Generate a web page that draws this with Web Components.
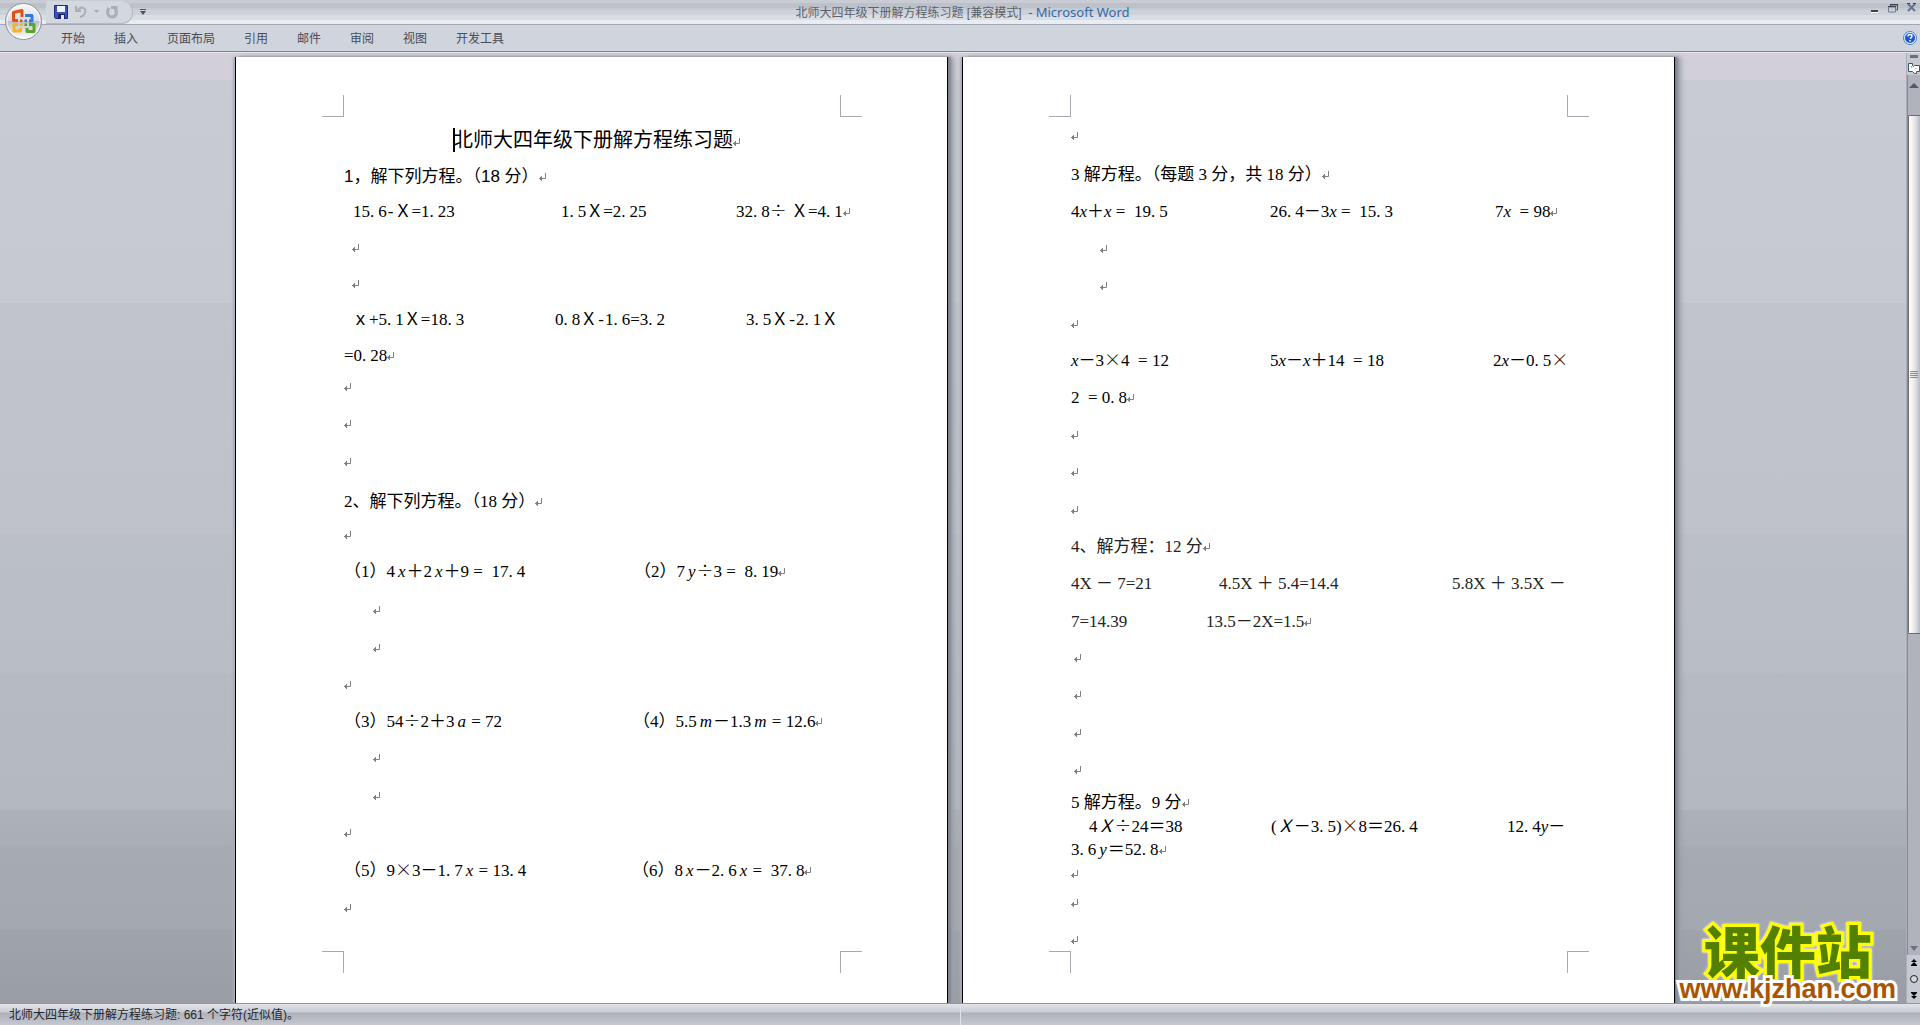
<!DOCTYPE html>
<html lang="zh-CN">
<head>
<meta charset="utf-8">
<title>北师大四年级下册解方程练习题 - Microsoft Word</title>
<style>
html,body{margin:0;height:100%}
body{overflow:hidden;font:12px/16px "Liberation Sans","Noto Sans CJK SC",sans-serif}
</style>
</head>
<body>
<word-app></word-app>
<script>
const define = (name, html, init) => {
  const t = document.createElement('template');
  t.innerHTML = html;
  customElements.define(name, class extends HTMLElement {
    constructor() {
      super();
      this.attachShadow({mode: 'open'}).append(t.content.cloneNode(true));
    }
    connectedCallback() { if (init) init(this, this.shadowRoot); }
  });
};
const BUTTON = 'button{border:0;padding:0;margin:0;background:none;font:inherit;color:inherit;display:flex;align-items:center;justify-content:center}svg{display:block}';

/* Line data: [height, segments, closing mark]. A segment is [start, text, style];
   *a* sets italics, style "r" is the proportional roman face. */
const PAGES = {
  1: [
    [95, [[109, '|北师大四年级下册解方程练习题', 't']], 1],
    [37, [[0, '1，解下列方程。（18 分）', 'b']], 1],
    [35, [[9, '15.6-Ｘ=1.23'], [217, '1.5Ｘ=2.25'], [392, '32.8÷ Ｘ=4.1']], 1],
    [36, [[8, '']], 1],
    [36, [[8, '']], 1],
    [36, [[8, 'ｘ+5.1Ｘ=18.3'], [211, '0.8Ｘ-1.6=3.2'], [402, '3.5Ｘ-2.1Ｘ']], 0],
    [36, [[0, '=0.28']], 1],
    [31, [[0, '']], 1],
    [37, [[0, '']], 1],
    [38, [[0, '']], 1],
    [40, [[0, '2、解下列方程。（18 分）']], 1],
    [33, [[0, '']], 1],
    [37, [[0, '（1）4*x*＋2*x*＋9 =  17.4'], [290, '（2）7*y*÷3 =  8.19']], 1],
    [38, [[29, '']], 1],
    [38, [[29, '']], 1],
    [37, [[0, '']], 1],
    [37, [[0, '（3）54÷2＋3*a* = 72', 'r'], [289, '（4）5.5*m*－1.3*m* = 12.6', 'r']], 1],
    [36, [[29, '']], 1],
    [38, [[29, '']], 1],
    [37, [[0, '']], 1],
    [38, [[0, '（5）9×3－1.7*x* = 13.4'], [288, '（6）8*x*－2.6*x* =  37.8']], 1],
    [37, [[0, '']], 1]
  ],
  2: [
    [91, [[0, '']], 1],
    [39, [[0, '3 解方程。（每题 3 分，共 18 分）']], 1],
    [37, [[0, '4*x*＋*x* =  19.5', 'n'], [199, '26.4－3*x* =  15.3', 'n'], [424, '7*x*  = 98', 'n']], 1],
    [37, [[29, '']], 1],
    [37, [[29, '']], 1],
    [38, [[0, '']], 1],
    [37, [[0, '*x*－3×4  = 12', 'n'], [199, '5*x*－*x*＋14  = 18', 'n'], [422, '2*x*－0.5×', 'n']], 0],
    [37, [[0, '2  = 0.8']], 1],
    [37, [[0, '']], 1],
    [37, [[0, '']], 1],
    [38, [[0, '']], 1],
    [37, [[0, '4、解方程：12 分', 'g']], 1],
    [37, [[0, '4X － 7=21', 'g r'], [148, '4.5X ＋ 5.4=14.4', 'g r'], [381, '5.8X ＋ 3.5X －', 'g r']], 0],
    [38, [[0, '7=14.39', 'g r'], [135, '13.5－2X=1.5', 'g r']], 1],
    [36, [[3, '']], 1],
    [37, [[3, '']], 1],
    [38, [[3, '']], 1],
    [37, [[3, '']], 1],
    [33, [[0, '5 解方程。9 分']], 1],
    [23, [[18, '4*Ｘ*÷24＝38', 'n'], [200, '(*Ｘ*－3.5)×8＝26.4', 'n'], [436, '12.4*y*－', 'n']], 0],
    [24, [[0, '3.6*y*＝52.8']], 1],
    [24, [[0, '']], 1],
    [29, [[0, '']], 1],
    [37, [[0, '']], 1]
  ]
};
const MARK = '<svg class="mark" width="8" height="8" viewBox="0 0 8 8" fill="none" stroke="#808080" aria-hidden="true"><path d="M6.500 0V5.500H0M2.500 3V8M1.500 4V7M.5 5V6"/></svg>';
const mark = (text, style) => {
  let s = text.replace(/\*(.+?)\*/g, '<i>$1</i>').replace(/-/g, '<span class="dash">-</span>').replace(/[÷×]/g, '<span class="op">$&</span>');
  if (!/r|b|t/.test(style)) s = s.replace(/\./g, '<span class="dot">.</span>');
  return s.replace('|', '<span class="caret"></span>');
};

define('doc-page', `<style>
:host{display:block;position:relative;box-sizing:border-box;flex:0 1 713px;min-width:0;height:100%;background:#fff;border:solid #000;border-width:0 1px;padding:0 106px 0 108px;
  box-shadow:1px 0 0 #7d818a,3px 0 2px #868a93,6px 0 5px #9ca0a9,-2px 0 2px #a9adb6}
.line{display:grid;align-items:end;color:#000;font:17px/24px "Liberation Serif","Noto Sans CJK SC",serif;white-space:pre}
.seg{grid-row:1}
.t{font-size:20px}
.b{font-family:"Liberation Sans","Noto Sans CJK SC",sans-serif}
.g{color:#222}
i{padding:0 1px 0 3px}
.n i{padding:0}
.dot{padding-right:4px}
.dash{padding:0 1px}
.op{display:inline-block;width:17px;text-align:center;font-family:"Noto Sans CJK SC",sans-serif;font-weight:300;line-height:16px}
.mark{display:inline-block;vertical-align:1px}
.caret{display:inline-block;width:2px;height:24px;background:#000;vertical-align:-5px;margin-right:-2px}
.crop{position:absolute;width:21px;height:21px;border:0 solid #a5a9b3}
.tl{top:38px;left:86px;border-width:0 1px 1px 0}
.tr{top:38px;right:85px;border-width:0 0 1px 1px}
.bl{top:894px;left:86px;border-width:1px 1px 0 0}
.br{top:894px;right:85px;border-width:1px 0 0 1px}
</style>
<span class="crop tl"></span><span class="crop tr"></span><span class="crop bl"></span><span class="crop br"></span>
<article></article>`, (el, root) => {
  root.querySelector('article').innerHTML = PAGES[el.getAttribute('number')].map(([h, segs, end]) => {
    const cols = segs.map(([x], i) => (x - (i ? segs[i - 1][0] : 0)) + 'px').join(' ') + ' 1fr';
    const body = segs.map(([, text, style = ''], i) =>
      `<span class="seg ${style}" style="grid-column:${i + 2}">${mark(text, style)}${end && i === segs.length - 1 ? MARK : ''}</span>`).join('');
    return `<div class="line" style="height:${h}px;grid-template-columns:${cols}">${body}</div>`;
  }).join('');
});

define('title-bar', `<style>
:host{display:flex;align-items:center;height:24px;border-bottom:1px solid #a3a8b2;background:linear-gradient(#c9ccd5 0 3px,#bdc1ca 3px 8px,#c6cad2 8px 10px,#cdd1d9 10px 15px,#dadde2 15px 20px,#e8ecf3 20px)}
${BUTTON}
.quick,.win{flex:1 1 0;display:flex;align-items:center}
.pill{display:flex;align-items:center;box-sizing:border-box;height:23px;margin-left:46px;padding:0 12px 0 8px;border:1px solid #b4b9c3;border-top:0;border-left:0;border-radius:0 11px 11px 0;background:#d3d7de;gap:5px}
.more{margin-left:7px}
h1{margin:0;padding-left:8px;font:12px/18px "Liberation Sans","Noto Sans CJK SC",sans-serif;color:#5c616b;white-space:pre}
h1 span{font:13px/18px "Noto Sans",sans-serif;color:#336aa8}
.win{justify-content:flex-end;gap:9px;padding-right:3px;height:16px;align-self:flex-start}
</style>
<div class="quick"><div class="pill">
<button aria-label="保存"><svg width="14" height="14" viewBox="0 0 14 14"><path d="M.5.5h13v13h-12l-1-1z" fill="#3f51b5" stroke="#22298c"/><path d="M3 1h8v6H3z" fill="#eef3ff"/><path d="M4 9h7v5H4z" fill="#1d2468"/><path d="M7 10h3v4H7z" fill="#e6e8f4"/></svg></button>
<button aria-label="撤消"><svg width="16" height="14" viewBox="0 0 16 14" fill="none" stroke="#a9aeb9" stroke-width="2"><path d="M3 1v5h5M4 6C8 0 14 3 12 8q-1 3-5 4"/></svg></button>
<button aria-label="撤消列表"><svg width="5" height="3"><path d="M0 0h5L2.500 3z" fill="#a3a8b3"/></svg></button>
<button aria-label="恢复"><svg width="16" height="14" viewBox="0 0 16 14" fill="none" stroke="#a9aeb9" stroke-width="3"><path d="M5 3C2 7 4 12 8 12s6-5 3-8M7 2.500H12V7"/></svg></button>
</div><button class="more" aria-label="自定义快速访问工具栏"><svg width="6" height="6"><path d="M0 0h6v1H0zM0 2h6L3 6z" fill="#4d525c"/></svg></button></div>
<h1>北师大四年级下册解方程练习题 [兼容模式]  <span>- Microsoft Word</span></h1>
<div class="win">
<button aria-label="最小化"><svg width="8" height="10"><path d="M0 7h7v2H0z" fill="#3f444e"/><path d="M0 9h7v1H0z" fill="#fff"/></svg></button>
<button aria-label="还原"><svg width="10" height="9" viewBox="0 0 10 9" fill="none"><path d="M2.500 2V1h7v5H8" stroke="#4c5667"/><path d="M.5 3h7v5h-7z" stroke="#6d7d96"/><path d="M0 2.500h8M2 .5h8" stroke="#3f444e"/></svg></button>
<button aria-label="关闭"><svg width="10" height="10" viewBox="0 0 10 10"><path d="M1 1l7 7M8 1L1 8" stroke="#67758c" stroke-width="2"/><path d="M0 .5h3M6 .5h3" stroke="#3f444e"/></svg></button>
</div>`);

define('ribbon-tabs', `<style>
:host{display:flex;align-items:center;height:26px;padding:0 3px 0 61px;background:#d0d4dc;border-bottom:1px solid #80868f;box-shadow:0 1px #e4e6eb;position:relative}
${BUTTON}
nav{display:flex;gap:29px;flex:1;color:#474d59;font-size:12px;line-height:18px;padding-top:2px}
</style>
<nav><button>开始</button><button>插入</button><button>页面布局</button><button>引用</button><button>邮件</button><button>审阅</button><button>视图</button><button>开发工具</button></nav>
<button aria-label="帮助"><svg width="14" height="14" viewBox="0 0 14 14" fill="none"><circle cx="7" cy="7" r="6.500" fill="#e4effc" stroke="#4b83cf"/><circle cx="7" cy="7" r="5" fill="#1d55cf"/><path d="M5 5.500q0-2 2-2t2 1.700q0 1-2 2.300M7 9v1.500" stroke="#fff" stroke-width="1.500"/></svg></button>`);

define('office-button', `<style>
:host{position:absolute;left:4px;top:2px;z-index:2}
${BUTTON}</style>
<button aria-label="Office 按钮"><svg width="39" height="39" viewBox="0 0 39 39" fill="none">
<defs><linearGradient id="g" x2="0" y2="1"><stop stop-color="#f8f8fa"/><stop offset=".48" stop-color="#dcdde1"/><stop offset=".5" stop-color="#bfc1c8"/><stop offset="1" stop-color="#fff"/></linearGradient></defs>
<circle cx="19.500" cy="19.500" r="18" fill="url(#g)" stroke="#8c919b"/><circle cx="19.500" cy="19.500" r="16.500" stroke="#fff" opacity=".8"/>
<g stroke-width="3" stroke-linejoin="round"><path d="M14 18.500H9.500V10.500l8.500-2V15" stroke="#e2500f"/><path d="M21 13.500h7V19H25" stroke="#2f7fd6"/><path d="M14 22.500H10V29h6.500V26" stroke="#f5b51b"/><path d="M25 22.500h5V29.500h-7V26" stroke="#5aa52e"/></g>
<path d="M16 17.500h2.500V20H16z" fill="#e2500f"/><path d="M20.500 17.500H23V20h-2.500z" fill="#2f7fd6"/><path d="M16 21.500h2.500V24H16z" fill="#f5b51b"/><path d="M20.500 21.500H23V24h-2.500z" fill="#5aa52e"/></svg></button>`);

define('scroll-rail', `<style>
:host{display:flex;flex-direction:column;align-items:center;flex:none;width:14px;background:#c6c9d1;border-left:1px solid #a9adb6;box-sizing:border-box}
${BUTTON}
.split{width:8px;height:3px;background:#6b6e75;margin:3px 0 2px}
.ruler{height:15px}
.track{flex:1;width:100%;background:#b0b3bc;border-left:1px solid #868a93;box-sizing:border-box;display:flex;flex-direction:column;align-items:center}
.up{height:40px;padding-bottom:25px;box-sizing:border-box;padding-top:5px}
.thumb{box-sizing:border-box;width:13px;flex:0 0 519px;border:1px solid #6b6e75;border-radius:1px;background:linear-gradient(90deg,#fff,#fbf7e9 20%,#e7e9f0 45%,#cfd4dd 75%,#b4b8c1)}
.down{margin-top:auto;height:14px}
.nav{display:flex;flex-direction:column;justify-content:space-around;height:48px}
</style>
<span class="split"></span>
<button class="ruler" aria-label="标尺"><svg width="12" height="12" viewBox="0 0 12 12" fill="#fff" stroke="#37526b"><path d="M.5 1.500h4v2l1 1 1-1h5v6h-3v2h-2l-2-2h-4z"/><path d="M3 4l1 2M8 6v1" stroke="#8ba0b5"/></svg></button>
<div class="track">
<button class="up" aria-label="向上滚动"><svg width="10" height="5"><path d="M5 0l5 5H0z" fill="#565a64"/></svg></button>
<button class="thumb" aria-label="滚动块"><svg width="8" height="8"><path d="M0 .5h8M0 2.500h8M0 4.500h8M0 6.500h8" stroke="#868a93"/></svg></button>
<button class="down" aria-label="向下滚动"><svg width="8" height="5"><path d="M4 5L0 0h8z" fill="#6d717b"/></svg></button>
</div>
<div class="nav">
<button aria-label="前一页"><svg width="6" height="7"><path d="M3 0l3 3H0zM3 3l3 3H0zM0 6h6v1H0z"/></svg></button>
<button aria-label="选择浏览对象"><svg width="8" height="8"><circle cx="4" cy="4" r="3.500" fill="#d5d7dd" stroke="#222"/></svg></button>
<button aria-label="下一页"><svg width="6" height="7"><path d="M0 0h6v1H0zM0 1h6L3 4zM0 4h6L3 7z"/></svg></button>
</div>`);

define('status-bar', `<style>
:host{display:flex;align-items:center;height:21px;border-top:1px solid #92969e;background:linear-gradient(#e2e4e9,#c9ccd4 8px,#adb1ba 9px,#c5c8d1);color:#24272d;font-size:12px;line-height:18px}
span{width:50%;box-sizing:border-box;padding-left:9px}
span+span{border-left:1px solid #e0e2e8;height:20px;padding:0}
</style><span>北师大四年级下册解方程练习题: 661 个字符(近似值)。</span><span></span>`);

define('site-stamp', `<style>
:host{position:absolute;right:24px;bottom:24px;z-index:3;display:flex;flex-direction:column;align-items:center}
b{font:900 56px/56px "Noto Sans CJK SC",sans-serif;color:#548000;-webkit-text-stroke:6px #ff0;paint-order:stroke fill;filter:drop-shadow(0 0 1px #fff)}
a{position:relative;font:bold 27px/24px "Liberation Sans",sans-serif;color:#a85400;text-decoration:none;-webkit-text-stroke:6px #fff;paint-order:stroke fill}
</style><b>课件站</b><a href="#">www.kjzhan.com</a>`);

define('word-app', `<style>
:host{display:flex;flex-direction:column;height:100vh;position:relative;overflow:hidden}
main{flex:1;min-height:0;display:flex;background:#d2cfd9}
.desk{flex:1;display:flex;justify-content:center;gap:14px;padding:5px 0 0 4px;overflow:hidden;
 background:linear-gradient(#d2cfd9 0 28px,#c8cbd3 28px,#c6c9d1 251px,#c1c4cd 251px,#bfc2cb 482px,#bbbfc8 482px,#b9bdc6 621px,#b6bac3 621px,#b4b8c1 758px,#adb1b9 758px,#a9adb5 794px,#a6aab2 794px,#a4a8b0 878px,#9fa3ab 878px,#999da5)}
</style>
<title-bar></title-bar><ribbon-tabs></ribbon-tabs>
<main><div class="desk"><doc-page number="1"></doc-page><doc-page number="2"></doc-page></div><scroll-rail></scroll-rail></main>
<status-bar></status-bar><office-button></office-button><site-stamp></site-stamp>`);
</script>
</body>
</html>
